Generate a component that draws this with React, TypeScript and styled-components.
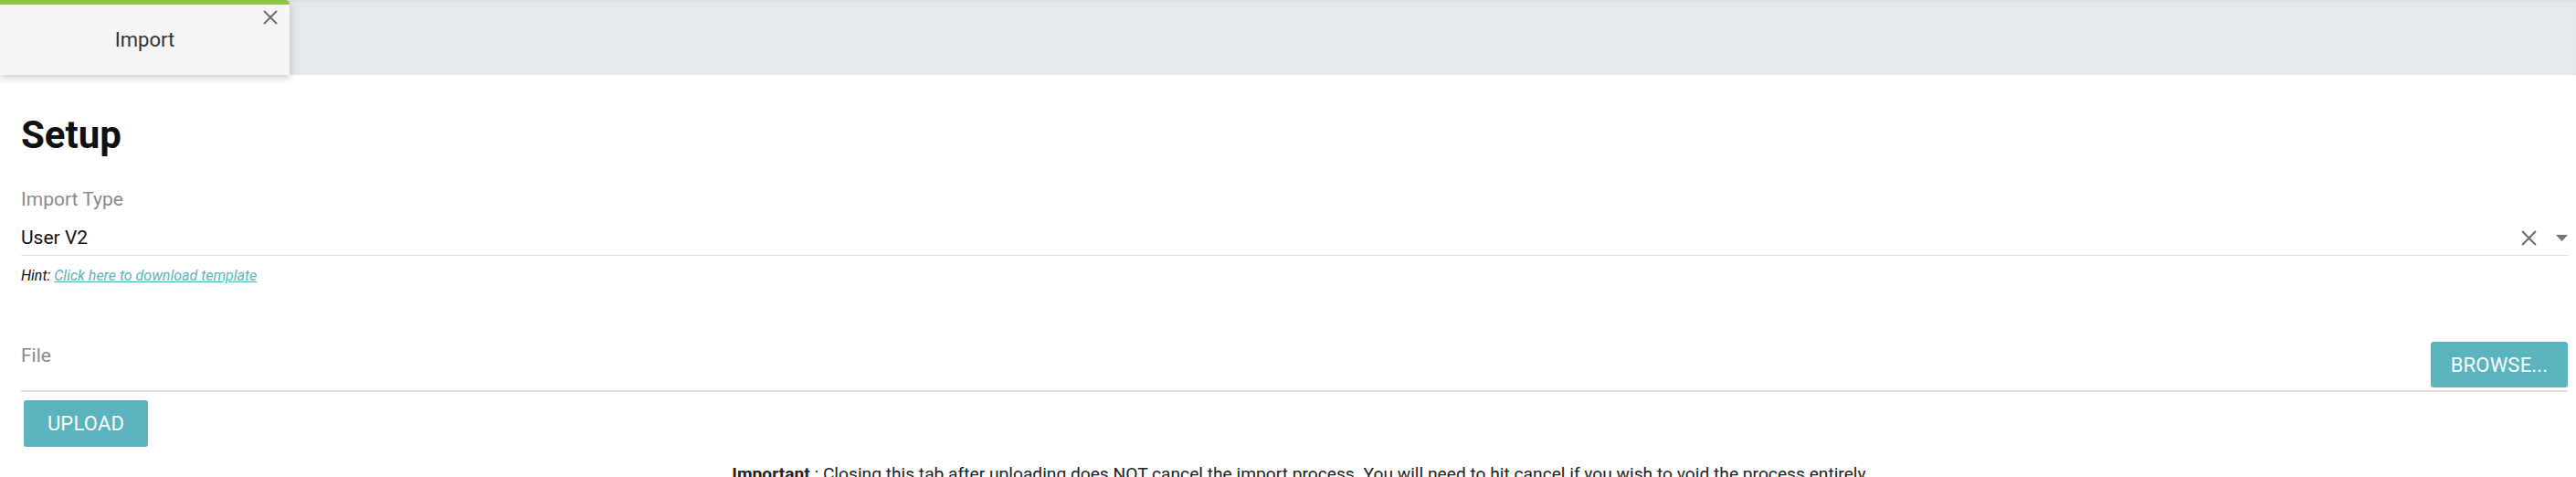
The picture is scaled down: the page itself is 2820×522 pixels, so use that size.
import styled, { createGlobalStyle } from "styled-components";

const GlobalStyle = createGlobalStyle`
  html, body {
    margin: 0;
    padding: 0;
    background: #ffffff;
    font-family: Roboto, "Liberation Sans", Arial, sans-serif;
  }
`;

const TabBar = styled.div`
  height: 82px;
  background: #e6e9ec;
  box-shadow: inset 0 2px 3px rgba(0, 0, 0, 0.04);
  display: flex;
  align-items: stretch;
`;

const Tab = styled.div`
  position: relative;
  width: 317px;
  background: #f5f5f5;
  border-top: 5px solid #8fc545;
  border-top-right-radius: 5px;
  box-shadow: 0 3px 8px rgba(0, 0, 0, 0.22);
  display: flex;
  align-items: center;
  justify-content: center;
  font-size: 22px;
  color: #333333;
`;

const TabClose = styled.button`
  position: absolute;
  top: 5px;
  right: 12px;
  width: 18px;
  height: 18px;
  padding: 0;
  border: none;
  background: none;
  display: flex;
`;

const Content = styled.div`
  padding: 45px 9px 0 23px;
`;

const Heading = styled.h1`
  margin: 0;
  font-size: 42px;
  line-height: 42px;
  font-weight: 700;
  color: #111111;
`;

const Label = styled.div`
  font-size: 21px;
  line-height: 24px;
  color: #8a8a8a;
`;

const SelectField = styled.div`
  margin-top: 37px;
`;

const SelectRow = styled.div`
  margin-top: 18px;
  padding-bottom: 7px;
  border-bottom: 1px solid #e0e0e0;
  display: flex;
  align-items: center;
`;

const SelectValue = styled.div`
  flex: 1;
  font-size: 21px;
  line-height: 24px;
  color: #111111;
`;

const SelectIcons = styled.div`
  display: flex;
  align-items: center;
  gap: 20px;
`;

const Hint = styled.div`
  margin-top: 12px;
  font-size: 16px;
  line-height: 20px;
  font-style: italic;
  color: #111111;
`;

const HintLink = styled.a`
  color: #5ab4bd;
  text-decoration: underline;
`;

const FileRow = styled.div`
  margin-top: 62px;
  padding-bottom: 3px;
  border-bottom: 2px solid #e0e0e0;
  display: flex;
  justify-content: space-between;
  align-items: flex-start;
`;

const FileLabel = styled(Label)`
  margin-top: 3px;
`;

const Button = styled.button<{ $w: number; $h: number }>`
  width: ${(p) => p.$w}px;
  height: ${(p) => p.$h}px;
  border: none;
  border-radius: 3px;
  background: #5ab4bd;
  color: #ffffff;
  font-family: Roboto, "Liberation Sans", Arial, sans-serif;
  font-size: 22px;
  font-weight: 400;
  letter-spacing: 0.2px;
  padding: 0;
  display: flex;
  align-items: center;
  justify-content: center;
`;

const UploadWrap = styled.div`
  margin: 9px 0 0 3px;
`;

const Notice = styled.div`
  margin-top: 18px;
  padding-left: 14px;
  text-align: center;
  font-size: 19.2px;
  line-height: 24px;
  color: #222222;
`;

const CloseIcon = ({ size, color }: { size: number; color: string }) => (
  <svg width={size} height={size} viewBox="0 0 18 18">
    <path d="M2 2 L16 16 M16 2 L2 16" stroke={color} strokeWidth="2" fill="none" />
  </svg>
);

const Caret = () => (
  <svg width="13" height="7" viewBox="0 0 13 7">
    <path d="M0 0 L13 0 L6.5 7 Z" fill="#757575" />
  </svg>
);

export default function App() {
  return (
    <>
      <GlobalStyle />
      <TabBar>
        <Tab>
          Import
          <TabClose>
            <CloseIcon size={18} color="#6f6f6f" />
          </TabClose>
        </Tab>
      </TabBar>
      <Content>
        <Heading>Setup</Heading>
        <SelectField>
          <Label>Import Type</Label>
          <SelectRow>
            <SelectValue>User V2</SelectValue>
            <SelectIcons>
              <CloseIcon size={19} color="#6f6f6f" />
              <Caret />
            </SelectIcons>
          </SelectRow>
        </SelectField>
        <Hint>
          Hint: <HintLink href="#">Click here to download template</HintLink>
        </Hint>
        <FileRow>
          <FileLabel>File</FileLabel>
          <Button $w={150} $h={50}>BROWSE...</Button>
        </FileRow>
        <UploadWrap>
          <Button $w={136} $h={51}>UPLOAD</Button>
        </UploadWrap>
        <Notice>
          <b>Important</b> : Closing this tab after uploading does NOT cancel the import process. You will need to hit cancel if you wish to void the process entirely.
        </Notice>
      </Content>
    </>
  );
}
